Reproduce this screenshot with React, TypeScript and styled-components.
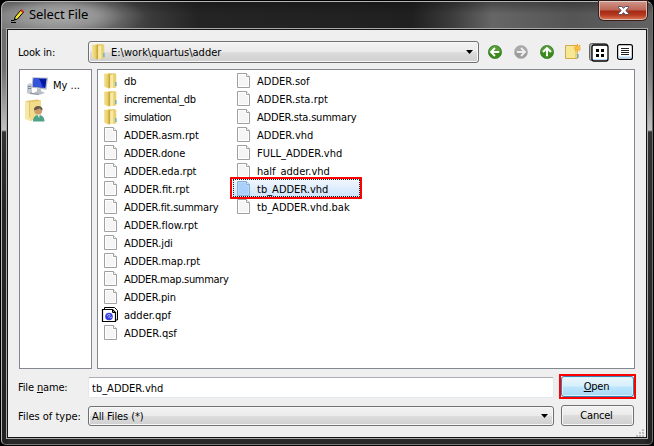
import React from 'react';
import styled, { createGlobalStyle, css } from 'styled-components';

const Global = createGlobalStyle`
  * { box-sizing: border-box; }
  html, body { margin: 0; padding: 0; background: #000; overflow: hidden; }
  button { font: inherit; color: inherit; padding: 0; }
`;

const Window = styled.div`
  width: 654px;
  height: 446px;
  padding: 1px;
  background: #000;
  font-family: 'DejaVu Sans Condensed', 'Noto Sans', sans-serif;
  font-size: 11px;
  line-height: 18px;
  color: #000;
  white-space: nowrap;
`;

const Frame = styled.div`
  height: 444px;
  border: 1px solid #b4b4b4;
  border-right-color: #6e6e6e;
  border-bottom-color: #777;
  border-radius: 7px 7px 5px 5px;
  padding: 0 5px 5px 4px;
  background:
    radial-gradient(ellipse 85px 24px at 58px 14px, #acacac 0, #9c9c9ccc 45%, #80808055 75%, transparent 100%) no-repeat 0 0 / 200px 26px,
    linear-gradient(180deg, #0a0a0a55 0, transparent 12px) no-repeat 0 0 / 100% 27px,
    linear-gradient(90deg, #7c7c7c 0, #6a6a6a 90px, #3a3a3a 150px, #242424 195px, #202020 410px, #3c3c3c 450px, #666 490px, #555 570px, #626262 100%) no-repeat 0 0 / 100% 27px,
    linear-gradient(180deg, #6c6c6c 0, #707070 40px, #c0c0c0 101px, #333 103px, #262626 180px, #222 100%) no-repeat 0 27px / 6px 100%,
    linear-gradient(180deg, #606060 0, #777 40px, #c0c0c0 101px, #333 103px, #202020 100%) no-repeat 100% 27px / 6px 100%,
    #282828;
`;

const TitleBar = styled.header`
  display: flex;
  height: 26px;
  padding-left: 5px;
  align-items: flex-start;
`;

const TitleIcon = styled.svg`
  display: block;
  width: 14px;
  height: 14px;
  margin-top: 7px;
`;

const Title = styled.h1`
  flex: 1;
  margin: 3px 0 0 4px;
  font: 400 13px/19px 'Noto Sans', sans-serif;
  letter-spacing: -0.1px;
  color: #000;
`;

const CloseButton = styled.button`
  display: grid;
  place-items: center;
  width: 48px;
  height: 19px;
  margin-top: -1px;
  border: 1px solid #d9b8b0;
  border-top-color: #d8d0cc;
  border-radius: 0 0 5px 5px;
  background: linear-gradient(180deg, #cf9186 0, #bc6656 8px, #a62914 9px, #b53820 13px, #d8704c 100%);
  box-shadow: 0 0 0 1px #3d1c16;
`;

const Client = styled.main`
  width: 642px;
  height: 411px;
  border: 1px solid #aaa;
  background: #efefef;
  box-shadow: inset 0 0 0 1px #141414;
  display: grid;
  grid-template-rows: 40px 300px 37px 32px;
`;

const LookRow = styled.div`
  display: flex;
  align-items: flex-start;
  padding: 12px 0 0 11px;
`;

const Label = styled.label<{ $ls?: number; $drop?: number }>`
  width: 70px;
  height: 21px;
  padding-top: ${p => p.$drop ?? 0}px;
  line-height: 21px;
  letter-spacing: ${p => p.$ls ?? 0}px;
  flex: none;
`;

const comboFace = css`
  border: 1px solid #707070;
  border-radius: 3px;
  background: linear-gradient(180deg, #f2f2f2 0, #ebebeb 48%, #dddddd 50%, #cfcfcf 100%);
  box-shadow: inset 0 0 0 1px #f8f8f8;
`;

const Combo = styled.div<{ $w: number; $h: number }>`
  ${comboFace}
  display: flex;
  align-items: center;
  width: ${p => p.$w}px;
  height: ${p => p.$h}px;
  padding: 0 5px 0 3px;
  flex: none;
`;

const Text = styled.span<{ $ls?: number }>`
  letter-spacing: ${p => p.$ls ?? 0}px;
`;

const ComboText = styled(Text)<{ $gap?: number }>`
  flex: 1;
  padding-top: 2px;
  margin-left: ${p => p.$gap ?? 0}px;
`;

const Tools = styled.div`
  display: flex;
  align-items: center;
  height: 22px;
  margin-left: 9px;
`;

const ToolIcon = styled.svg<{ $gap: number }>`
  display: block;
  flex: none;
  margin-left: ${p => p.$gap}px;
`;

const Lists = styled.div`
  display: flex;
  gap: 5px;
  padding-left: 12px;
`;

const Panel = styled.section<{ $w: number }>`
  width: ${p => p.$w}px;
  height: 300px;
  border: 1px solid #828790;
  background: #fff;
`;

const Places = styled(Panel)`
  padding: 3px 0 0 5px;
`;

const Place = styled.div<{ $indent?: number }>`
  display: flex;
  align-items: center;
  height: 25px;
  padding-left: ${p => p.$indent ?? 0}px;
  gap: 4px;
`;

const Files = styled(Panel)`
  display: grid;
  grid-template-columns: 133px 140px;
  padding: 1px 0 0 5px;
  align-content: start;
`;

const Column = styled.div`
  display: flex;
  flex-direction: column;
`;

const FileText = styled(Text)`
  padding-top: 2px;
`;

const FileRow = styled.div<{ $selected?: boolean }>`
  display: flex;
  align-items: center;
  height: 18px;
  padding: 2px 0 0 1px;
  gap: 6px;
  ${p => p.$selected && css`
    position: relative;
    width: 127px;
    margin-left: -3px;
    padding-left: 4px;
    border-radius: 1px;
    background: linear-gradient(180deg, #f1f7fe, #cde4fc);
    outline: 1px dotted #222;
    outline-offset: -1px;
    &::after {
      content: '';
      position: absolute;
      inset: -2px -2px -2px -3px;
      border: 2px solid #f00;
    }
  `}
`;

const Icon = styled.svg`
  display: block;
  flex: none;
  overflow: visible;
`;

const FormRow = styled.div<{ $top: number }>`
  display: flex;
  align-items: flex-start;
  padding: ${p => p.$top}px 0 0 11px;
`;

const NameInput = styled.div`
  width: 466px;
  height: 21px;
  padding: 1px 0 0 3px;
  line-height: 19px;
  border: 1px solid #e3e9ef;
  border-top-color: #abadb3;
  border-radius: 2px;
  background: #fff;
`;

const Button = styled.button<{ $primary?: boolean }>`
  ${comboFace}
  width: 73px;
  height: 21px;
  margin: -1px 0 0 7px;
  padding: 1px 2px 0 0;
  line-height: 18px;
  letter-spacing: -0.2px;
  text-align: center;
  ${p => p.$primary && css`
    position: relative;
    border-color: #3c7fb1;
    background: linear-gradient(180deg, #eaf6fd 0, #d7effc 48%, #bde6fd 52%, #a7d9f5 100%);
    box-shadow: inset 0 0 0 1px #d8f2fc;
    &::after {
      content: '';
      position: absolute;
      inset: -3px;
      border: 2px solid #f00;
    }
  `}
`;

const Grip = styled.svg`
  display: block;
  margin: 2px 3px 0 auto;
`;

const Folder = () => (
  <Icon width="14" height="16" viewBox="0 0 14 16">
    <defs>
      <linearGradient id="fold" x1="0" x2="1">
        <stop offset="0" stopColor="#f5e69a" /><stop offset="1" stopColor="#e4c65c" />
      </linearGradient>
    </defs>
    <path d="M4 .2h7.5v13L4 14.5z" fill="#e6c85e" />
    <path d="M8.5 1.2l3.8-.2v13.4l-3.8.6z" fill="#e9d070" />
    <path d="M11.3 9h1.2v4h-1.2z" fill="#4cadd9" />
    <path d="M0 .4l4.6.6v14.5L0 13.6z" fill="url(#fold)" />
    <path d="M4.6 1.4l1.6-.5v14.1l-1.6.5z" fill="#c9a83c" />
    <path d="M6.2 2l3-.8v13.3l-3 1z" fill="#f8eaa8" />
  </Icon>
);

const Sheet = ({ selected }: { selected?: boolean }) => (
  <Icon width="14" height="16" viewBox="0 0 14 16">
    <path d="M.5.5h9l3 3v11H.5z" fill={selected ? '#acd2fa' : '#f8f8f8'} stroke={selected ? '#8ab0d4' : '#a0a0a0'} />
    <path d="M1.5 1.5h7v3h3v9H1.5z" fill={selected ? '#a9d0fa' : '#f5f5f5'} stroke={selected ? '#b6d8fb' : '#fff'} />
    <path d="M9.5.5v3h3" fill={selected ? '#d8eafe' : '#fff'} stroke={selected ? '#8ab0d4' : '#a0a0a0'} />
  </Icon>
);

const Project = () => (
  <Icon width="14" height="16" viewBox="0 0 14 16">
    <path d="M.5 2V.5h10l3 3v9.5H12" fill="#fff" stroke="#000" />
    <path d="M-1.5 2.5h10l3 3v9h-13z" fill="#fff" stroke="#000" strokeWidth="1.2" />
    <path d="M8.5 2.5v3h3" fill="none" stroke="#000" />
    <circle cx="5" cy="9.5" r="3.8" fill="#3a40df" />
    <path d="M3 9l2-2 1 1.5L4.5 11M6 11l2-1" stroke="#a9b4ff" fill="none" />
  </Icon>
);

const Computer = () => (
  <Icon width="22" height="20" viewBox="0 0 22 20">
    <path d="M0 9l3-2 2 1v9l-3 1-2-1z" fill="#c5cbd2" />
    <path d="M1 10h3v1H1zM1 12h3v1H1z" fill="#7c858f" />
    <path d="M5.5 1.2L21 1.8l-1.6 12L4.6 11.5z" fill="#aeb7c1" />
    <path d="M6.7 2.3l12.7.4-1.3 9.3-12.2-1.5z" fill="#102bc4" />
    <path d="M6.7 2.3l6 .2 2.4 9.1-9.2-1.1z" fill="#3454db" />
    <path d="M12 3l7.4-.3-1.3 9.3z" fill="#0515a0" />
    <path d="M10 12.6l4 .6v2l4 1.5-4 1.8-8-1.2 4-2z" fill="#b7bec6" />
    <path d="M3 16.5l10 1.5-2 1-8-1z" fill="#8d959f" />
  </Icon>
);

const UserFolder = () => (
  <Icon width="22" height="24" viewBox="0 0 22 24">
    <path d="M1 2L12 .5l4 1V18L5 22z" fill="#e2c467" />
    <path d="M5 3l11-1.2v16L5 22z" fill="#f0dc8b" />
    <path d="M0 2l4 1.5V22l-4-2.2z" fill="#f6e9a7" />
    <path d="M8 22.5c0-4 2-6.5 5.5-6.5 4 0 6 2.8 6 6.5z" fill="#4da289" />
    <path d="M12 15h3l-1 4z" fill="#e9efed" />
    <circle cx="13.2" cy="11.5" r="4" fill="#c99c6c" />
    <path d="M9 11c-.3-5 8.8-5.4 8.6 0-1.6 0-2-.8-3-1.8-1.2 1-3.6 1.8-5.6 1.8z" fill="#66584b" />
  </Icon>
);

const Arrow = ({ kind }: { kind: 'back' | 'next' | 'up' }) => {
  const grey = kind === 'next';
  const turn = kind === 'back' ? 0 : kind === 'next' ? 180 : 90;
  return (
    <ToolIcon $gap={kind === 'back' ? 0 : 12} width="14" height="14" viewBox="0 0 14 14">
      <circle cx="7" cy="7" r="6.6" fill={grey ? '#9b9b9b' : '#3b8a1c'} stroke={grey ? '#b8b8b8' : '#397627'} strokeWidth=".7" />
      <path d="M1 7a6 6 0 0 1 12 0z" fill={grey ? '#b0b0b0' : '#62a547'} opacity=".7" />
      <path transform={`rotate(${turn} 7 7)`} d="M7 3L3 7l4 4M3.4 7h7.8" stroke={grey ? '#eee' : '#fff'} strokeWidth="1.9" fill="none" />
    </ToolIcon>
  );
};

const Caret = () => (
  <Icon width="7" height="4" viewBox="0 0 7 4"><path d="M0 0h7L3.5 4z" fill="#000" /></Icon>
);

type Entry = { name: string; ls?: number; kind?: 'folder' | 'project'; selected?: boolean };

const left: Entry[] = [
  { name: 'db', kind: 'folder' },
  { name: 'incremental_db', kind: 'folder', ls: -0.35 },
  { name: 'simulation', kind: 'folder', ls: -0.45 },
  { name: 'ADDER.asm.rpt', ls: -0.1 },
  { name: 'ADDER.done', ls: -0.15 },
  { name: 'ADDER.eda.rpt', ls: -0.1 },
  { name: 'ADDER.fit.rpt' },
  { name: 'ADDER.fit.summary', ls: -0.2 },
  { name: 'ADDER.flow.rpt', ls: -0.05 },
  { name: 'ADDER.jdi', ls: -0.1 },
  { name: 'ADDER.map.rpt', ls: -0.1 },
  { name: 'ADDER.map.summary', ls: -0.3 },
  { name: 'ADDER.pin', ls: -0.15 },
  { name: 'adder.qpf', kind: 'project' },
  { name: 'ADDER.qsf' },
];

const right: Entry[] = [
  { name: 'ADDER.sof' },
  { name: 'ADDER.sta.rpt', ls: 0.05 },
  { name: 'ADDER.sta.summary', ls: -0.2 },
  { name: 'ADDER.vhd' },
  { name: 'FULL_ADDER.vhd' },
  { name: 'half_adder.vhd' },
  { name: 'tb_ADDER.vhd', selected: true },
  { name: 'tb_ADDER.vhd.bak' },
];

const FileColumn = ({ entries }: { entries: Entry[] }) => (
  <Column>
    {entries.map(e => (
      <FileRow key={e.name} $selected={e.selected}>
        {e.kind === 'folder' ? <Folder /> : e.kind === 'project' ? <Project /> : <Sheet selected={e.selected} />}
        <FileText $ls={e.ls}>{e.name}</FileText>
      </FileRow>
    ))}
  </Column>
);

export default function App() {
  return (
    <Window>
      <Global />
      <Frame>
        <TitleBar>
          <TitleIcon viewBox="0 0 14 14">
            <path d="M4 8L10 1l2.5 2L6.5 10l-3 1z" fill="#f5e429" stroke="#000" />
            <path d="M9.3 1.8L10.5.3 13 2.3 11.8 3.9z" fill="#d92a20" />
            <path d="M3.6 9.2l1.6 1.4-2.4.8z" fill="#000" />
            <path d="M0 13.5h5M0 11.5h3" stroke="#000" />
          </TitleIcon>
          <Title>Select File</Title>
          <CloseButton aria-label="Close">
            <Icon width="11" height="9" viewBox="0 0 11 9">
              <path d="M.5.5h3.3l1.7 1.9L7.2.5h3.3v1.3L7.7 4.5l2.8 2.7v1.3H7.2L5.5 6.6 3.8 8.5H.5V7.2l2.8-2.7L.5 1.8z" fill="#fff" stroke="#525365" />
            </Icon>
          </CloseButton>
        </TitleBar>
        <Client>
          <LookRow>
            <Label $ls={-0.2} $drop={1}>Look in:</Label>
            <Combo $w={391} $h={22}>
              <Folder />
              <ComboText $gap={5}>E:\work\quartus\adder</ComboText>
              <Caret />
            </Combo>
            <Tools>
              <Arrow kind="back" />
              <Arrow kind="next" />
              <Arrow kind="up" />
              <ToolIcon $gap={11} width="16" height="16" viewBox="0 0 16 16">
                <path d="M.5 1.5h12v13H.5z" fill="#f6e795" stroke="#d4ab4c" />
                <path d="M10 3h2.5v11H10z" fill="#ead277" />
                <path d="M12.3 10h1.2v4h-1.2z" fill="#4a9ed0" />
                <path d="M12.5 0v8M8.5 4h8M9.8 1.2l5.5 5.5M15.3 1.2L9.8 6.7" stroke="#efa62a" strokeWidth="1.2" />
                <circle cx="12.5" cy="4" r="1.8" fill="#ffc23c" />
              </ToolIcon>
              <ToolIcon $gap={8} width="20" height="19" viewBox="0 0 20 19">
                <rect x=".5" y=".5" width="18" height="17" rx="2" fill="#aaa" stroke="#666" />
                <rect x="3" y="2" width="16" height="16" rx="2" fill="#fff" stroke="#000" strokeWidth="1.3" />
                <path d="M4 16.5h14" stroke="#b9d9fb" />
                <path d="M7 6h3v3H7zM12 6h3v3h-3zM7 11h3v3H7zM12 11h3v3h-3z" fill="#000" />
              </ToolIcon>
              <ToolIcon $gap={8} width="16" height="16" viewBox="0 0 16 16">
                <rect x=".6" y=".6" width="14.8" height="14.8" rx="2" fill="#fff" stroke="#000" strokeWidth="1.2" />
                <path d="M2 13.5h12" stroke="#b9d9fb" strokeWidth="2" />
                <path d="M4 4.5h8M4 6.5h8M4 8.5h8M4 10.5h8" stroke="#222" />
              </ToolIcon>
            </Tools>
          </LookRow>
          <Lists>
            <Places $w={73}>
              <Place $indent={2}><Computer /><Text>My ...</Text></Place>
              <Place><UserFolder /></Place>
            </Places>
            <Files $w={538}>
              <FileColumn entries={left} />
              <FileColumn entries={right} />
            </Files>
          </Lists>
          <FormRow $top={8}>
            <Label $ls={-0.15}>File <u>n</u>ame:</Label>
            <NameInput><Text>tb_ADDER.vhd</Text></NameInput>
            <Button $primary><u>O</u>pen</Button>
          </FormRow>
          <div>
            <FormRow $top={0}>
              <Label>Files of type:</Label>
              <Combo $w={466} $h={20}><ComboText $ls={-0.1}>All Files (*)</ComboText><Caret /></Combo>
              <Button>Cancel</Button>
            </FormRow>
            <Grip width="8" height="8" viewBox="0 0 8 8">
              <path d="M6 0h2v2H6zM3 3h2v2H3zM6 3h2v2H6zM0 6h2v2H0zM3 6h2v2H3zM6 6h2v2H6z" fill="#bebebe" />
            </Grip>
          </div>
        </Client>
      </Frame>
    </Window>
  );
}
